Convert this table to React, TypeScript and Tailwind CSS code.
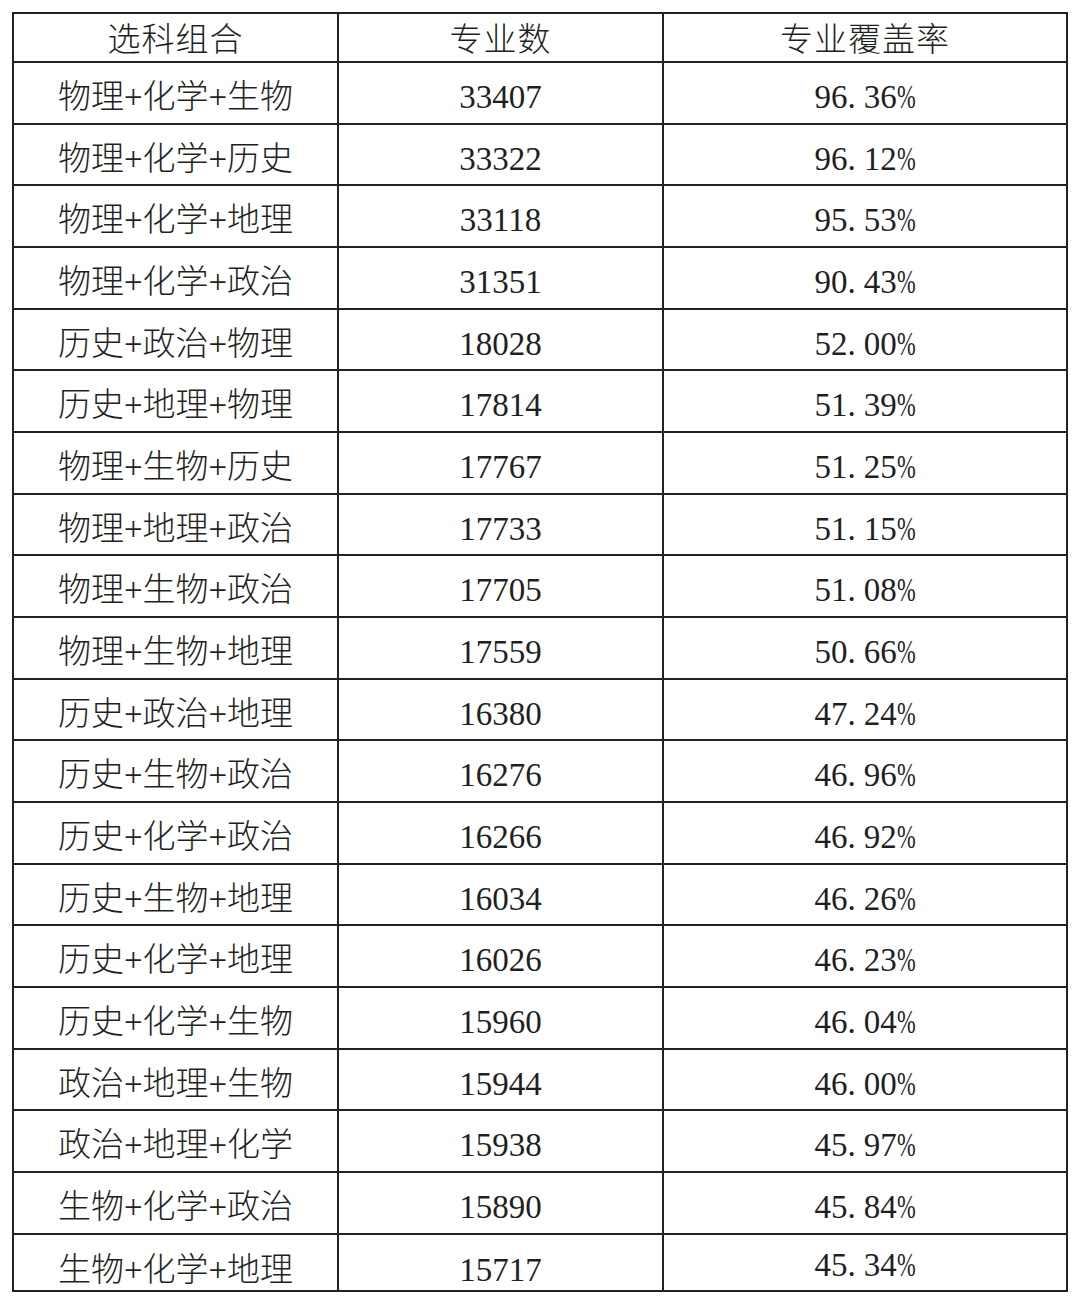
import React from "react";

const rows: [string, string, string][] = [
  ["物理+化学+生物", "33407", "96.36%"],
  ["物理+化学+历史", "33322", "96.12%"],
  ["物理+化学+地理", "33118", "95.53%"],
  ["物理+化学+政治", "31351", "90.43%"],
  ["历史+政治+物理", "18028", "52.00%"],
  ["历史+地理+物理", "17814", "51.39%"],
  ["物理+生物+历史", "17767", "51.25%"],
  ["物理+地理+政治", "17733", "51.15%"],
  ["物理+生物+政治", "17705", "51.08%"],
  ["物理+生物+地理", "17559", "50.66%"],
  ["历史+政治+地理", "16380", "47.24%"],
  ["历史+生物+政治", "16276", "46.96%"],
  ["历史+化学+政治", "16266", "46.92%"],
  ["历史+生物+地理", "16034", "46.26%"],
  ["历史+化学+地理", "16026", "46.23%"],
  ["历史+化学+生物", "15960", "46.04%"],
  ["政治+地理+生物", "15944", "46.00%"],
  ["政治+地理+化学", "15938", "45.97%"],
  ["生物+化学+政治", "15890", "45.84%"],
  ["生物+化学+地理", "15717", "45.34%"],
];

function Pct({ v }: { v: string }) {
  const [a, b] = v.replace("%", "").split(".");
  return (
    <span className="inline-flex items-baseline">
      <span>{a}.</span>
      <span className="inline-block w-[8px]" />
      <span>{b}</span>
      <span className="inline-block w-[19px] origin-left scale-x-[0.68]">%</span>
    </span>
  );
}

export default function App() {
  return (
    <div
      className="w-[1080px] h-[1305px] bg-white pt-[12px] pl-[12px] text-[#1f1f1f] font-light"
      style={{ fontFamily: '"Liberation Serif", "Noto Sans CJK SC", serif' }}
    >
      <div className="w-[1056px] border-2 border-[#222]">
        <div className="flex h-[47px] text-[33px] leading-none">
          <div className="w-[323px] flex items-center justify-center pt-[6px] tracking-[1px]">选科组合</div>
          <div className="w-[325px] border-l-2 border-[#222] flex items-center justify-center pt-[6px] tracking-[1px]">专业数</div>
          <div className="w-[404px] border-l-2 border-[#222] flex items-center justify-center pt-[6px] tracking-[1px]">专业覆盖率</div>
        </div>
        {rows.map((r, i) => (
          <div
            key={i}
            className={`flex border-t-2 border-[#222] text-[33px] leading-none ${
              i === rows.length - 1 ? "h-[57px]" : "h-[61.68px]"
            }`}
          >
            <div
              className={`w-[323px] flex items-center justify-center ${
                i === rows.length - 1 ? "pt-[16px]" : "pt-[9px]"
              }`}
            >
              {r[0]}
            </div>
            <div
              className={`w-[325px] border-l-2 border-[#222] flex items-center justify-center ${
                i === rows.length - 1 ? "pt-[16px]" : "pt-[9px]"
              }`}
            >
              {r[1]}
            </div>
            <div
              className={`w-[404px] border-l-2 border-[#222] flex items-center justify-center ${
                i === rows.length - 1 ? "pt-[6px]" : "pt-[9px]"
              }`}
            >
              <Pct v={r[2]} />
            </div>
          </div>
        ))}
      </div>
    </div>
  );
}
